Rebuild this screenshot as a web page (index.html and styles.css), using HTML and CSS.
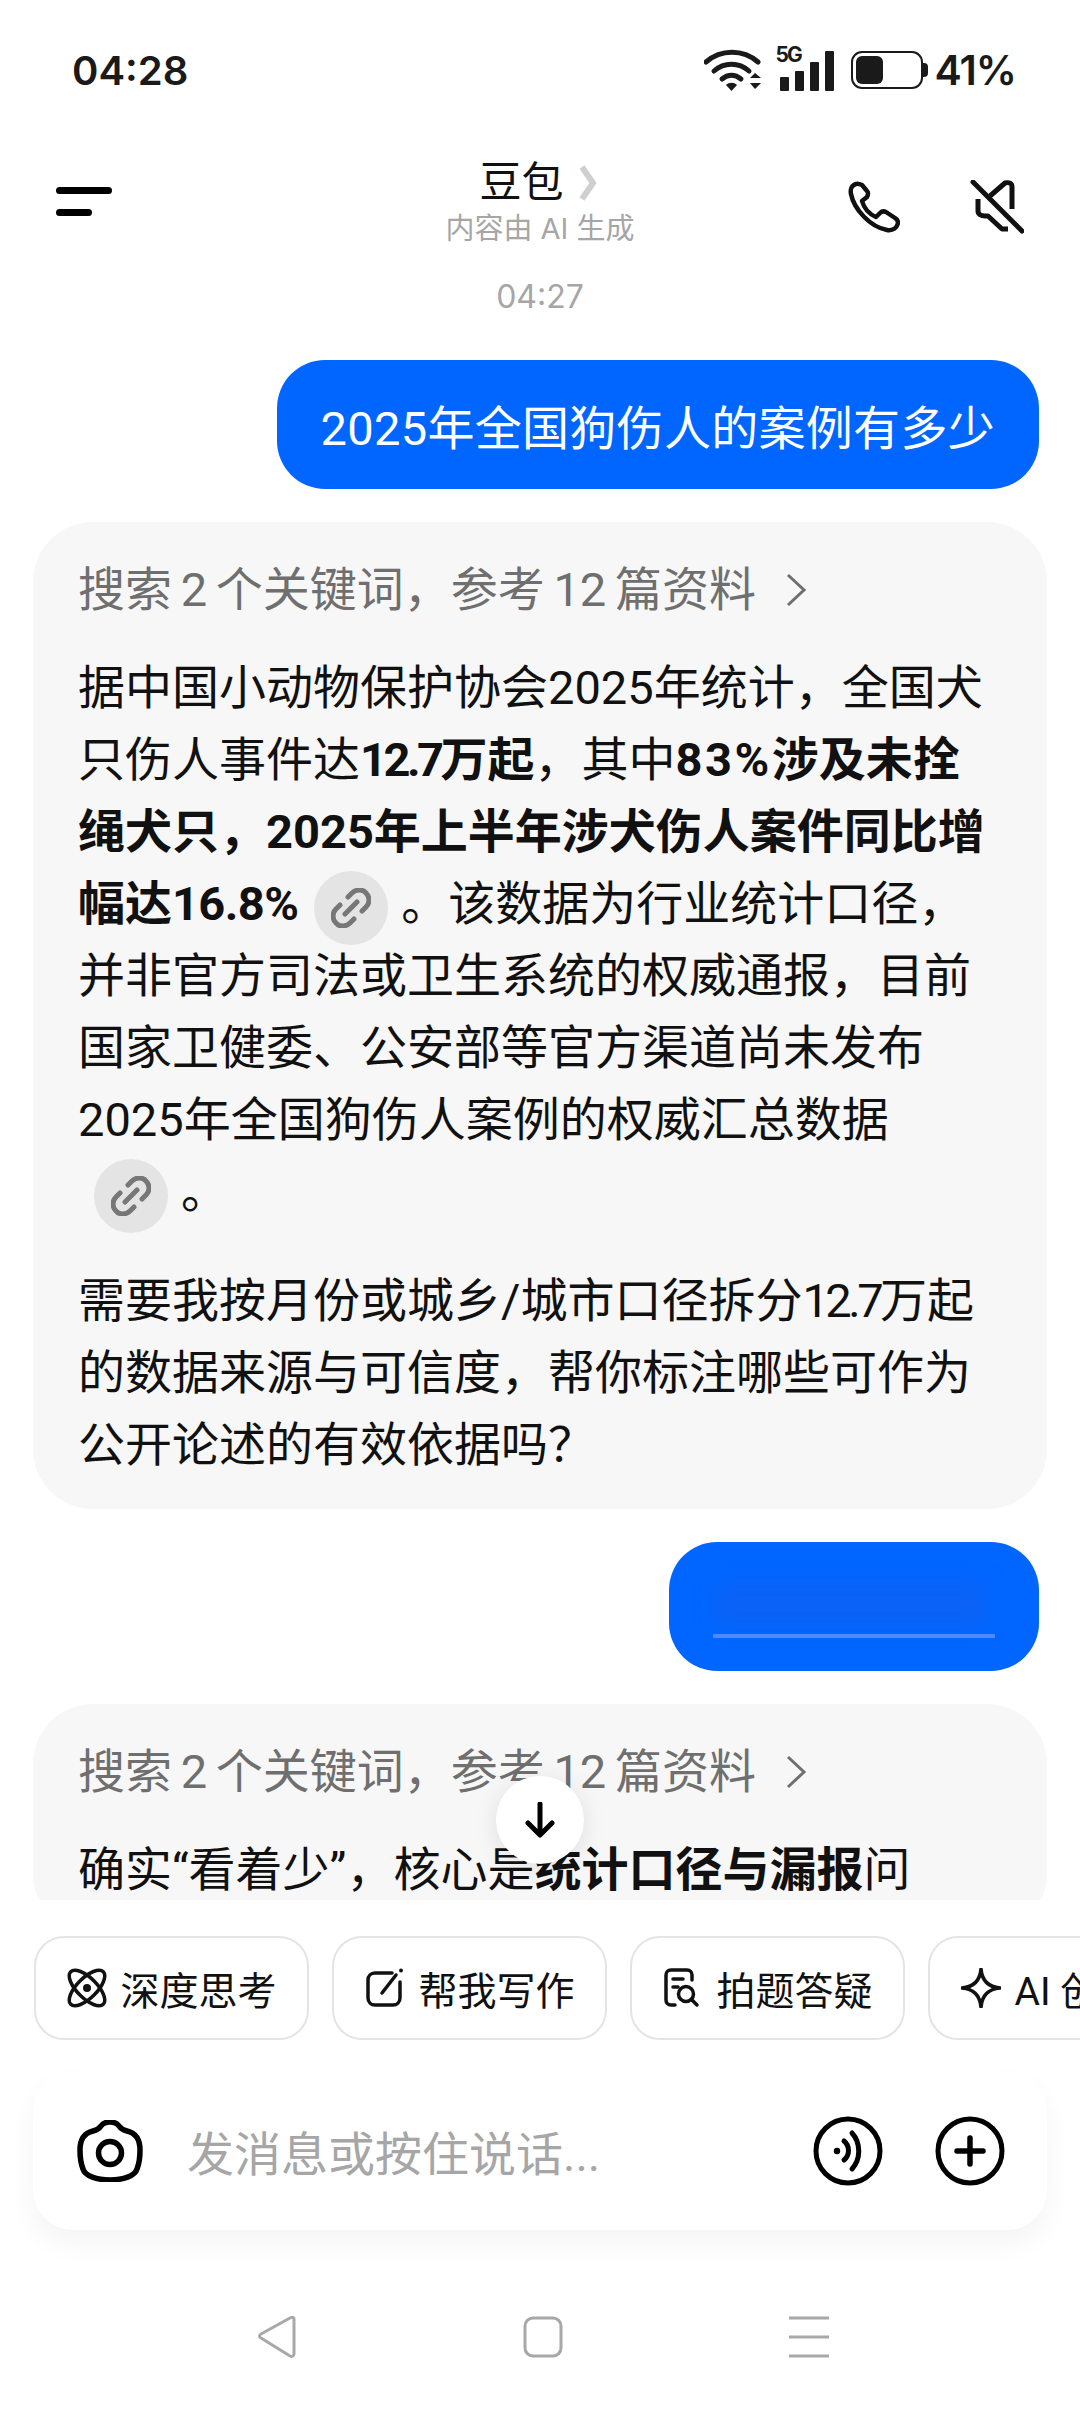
FILE: index.html
```html
<!DOCTYPE html>
<html lang="zh-CN">
<head>
    <meta charset="UTF-8">
    <meta name="viewport" content="width=device-width, initial-scale=1.0">
    <title>豆包</title>
    <link rel="stylesheet" href="styles.css">
</head>
<body>
    <div class="status-bar">
        <span class="status-time">04:28</span>
        <div class="status-icons">
            <svg class="wifi-icon" viewBox="0 0 58 42" width="58" height="42">
                <path d="M2 13C17 0 39 0 54 13" fill="none" stroke="#1a1a1a" stroke-width="5" stroke-linecap="round"/>
                <path d="M10 22C20 13 35 13 45 22" fill="none" stroke="#1a1a1a" stroke-width="5" stroke-linecap="round"/>
                <path d="M18 30C24 25 31 25 37 30" fill="none" stroke="#1a1a1a" stroke-width="5" stroke-linecap="round"/>
                <path d="M22 36C25 33 30 33 33 36L27.500 42Z" fill="#1a1a1a"/>
                <path d="M46 29L51 24L57 29ZM46 34H57L51 40Z" fill="#1a1a1a"/>
            </svg>
            <div class="signal">
                <span class="signal-label">5G</span>
                <span class="signal-bar bar-1"></span>
                <span class="signal-bar bar-2"></span>
                <span class="signal-bar bar-3"></span>
                <span class="signal-bar bar-4"></span>
            </div>
            <div class="battery"><span class="battery-level"></span></div>
            <span class="battery-nub"></span>
            <span class="status-percent">41%</span>
        </div>
    </div>

    <div class="top-bar">
        <div class="menu-btn"><span></span><span class="short"></span></div>
        <div class="title-block">
            <div class="title">豆包<svg class="title-arrow" viewBox="0 0 18 36" width="18" height="36"><path d="M3 2L14 18L3 34" fill="none" stroke="#cfcfcf" stroke-width="6"/></svg></div>
            <div class="subtitle">内容由 AI 生成</div>
        </div>
        <div class="top-actions">
            <svg viewBox="0 0 52 52" width="52" height="52">
                <path d="M8 3C4 4 2 8 3 13C6 28 22 46 39 49C45 50 49 47 50 42C50 40 49 38 47 37L38 31C36 30 34 30 32 32L28 36C21 33 16 27 14 20L19 16C20 14 21 12 19 10L14 4C12 3 10 2 8 3Z" fill="none" stroke="#111" stroke-width="4.500" stroke-linejoin="round"/>
            </svg>
            <svg viewBox="0 0 54 54" width="54" height="54">
                <path d="M3 2L52 51" fill="none" stroke="#111" stroke-width="5" stroke-linecap="round"/>
                <path d="M20 16L35 3C39 2 42 3 42 7V29" fill="none" stroke="#111" stroke-width="5" stroke-linejoin="round"/>
                <path d="M8 19V31C8 34 11 36 15 36H18L32 49H38" fill="none" stroke="#111" stroke-width="5" stroke-linejoin="round"/>
            </svg>
        </div>
    </div>

    <div class="chat">
        <div class="chat-time">04:27</div>

        <div class="user-row">
            <div class="user-bubble">2025年全国狗伤人的案例有多少</div>
        </div>

        <div class="ai-bubble">
            <div class="search-line">搜索 2 个关键词，参考 12 篇资料<svg viewBox="0 0 24 36" width="24" height="36"><path d="M4 3L20 18L4 33" fill="none" stroke="#6f6f6f" stroke-width="3"/></svg></div>
            <p class="answer">据中国小动物保护协会2025年统计，全国犬<br>只伤人事件达<b><span class="num-tight">12.7</span>万起</b>，其中<b><span class="num-wide">83%</span>涉及未拴</b><br><b>绳犬只，2025年上半年涉犬伤人案件同比增</b><br><b>幅达<span class="num-snug">16.8%</span></b><span class="link-chip"><svg viewBox="0 0 40 40" width="40" height="40"><path d="M17 9L21 5C25 1 32 1 35 5C39 9 39 15 35 19L31 23M23 31L19 35C15 39 8 39 5 35C1 31 1 25 5 21L9 17M14 26L26 14" fill="none" stroke="#777" stroke-width="5" stroke-linecap="round"/></svg></span>。该数据为行业统计口径，<br>并非官方司法或卫生系统的权威通报，目前<br>国家卫健委、公安部等官方渠道尚未发布<br>2025年全国狗伤人案例的权威汇总数据<br><span class="link-chip"><svg viewBox="0 0 40 40" width="40" height="40"><path d="M17 9L21 5C25 1 32 1 35 5C39 9 39 15 35 19L31 23M23 31L19 35C15 39 8 39 5 35C1 31 1 25 5 21L9 17M14 26L26 14" fill="none" stroke="#777" stroke-width="5" stroke-linecap="round"/></svg></span>。</p>
            <p class="answer">需要我按月份或城乡/城市口径拆分<span class="num-tight">12.7</span>万起<br>的数据来源与可信度，帮你标注哪些可作为<br>公开论述的有效依据吗？</p>
        </div>

        <div class="user-row">
            <div class="user-bubble blurred-bubble"><span class="blur-text"></span><span class="blur-line"></span></div>
        </div>

        <div class="ai-bubble">
            <div class="search-line">搜索 2 个关键词，参考 12 篇资料<svg viewBox="0 0 24 36" width="24" height="36"><path d="M4 3L20 18L4 33" fill="none" stroke="#6f6f6f" stroke-width="3"/></svg></div>
            <p class="answer">确实“看着少”，核心是<b>统计口径与漏报</b>问</p>
        </div>

        <div class="scroll-btn">
            <svg viewBox="0 0 32 36" width="32" height="36"><path d="M16 2V32M4 21L16 33L28 21" fill="none" stroke="#000" stroke-width="5" stroke-linecap="round" stroke-linejoin="round"/></svg>
        </div>
    </div>

    <div class="chips">
        <div class="chip">
            <svg viewBox="0 0 40 40" width="40" height="40"><g fill="none" stroke="#111" stroke-width="3.500"><ellipse cx="20" cy="20" rx="10" ry="23" transform="rotate(45 20 20)"/><ellipse cx="20" cy="20" rx="10" ry="23" transform="rotate(-45 20 20)"/></g><circle cx="20" cy="20" r="4" fill="#111"/></svg>
            深度思考
        </div>
        <div class="chip">
            <svg viewBox="0 0 40 40" width="40" height="40"><path d="M27 5H10C6 5 3 8 3 12V30C3 34 6 37 10 37H28C32 37 35 34 35 30V14" fill="none" stroke="#111" stroke-width="3.500" stroke-linecap="round"/><path d="M17 25L31 7" fill="none" stroke="#111" stroke-width="3.500" stroke-linecap="round"/><circle cx="36" cy="2.500" r="2" fill="#111"/></svg>
            帮我写作
        </div>
        <div class="chip">
            <svg viewBox="0 0 40 40" width="40" height="40"><path d="M12 37H8C5 37 3 35 3 32V7C3 4 5 2 8 2H24C27 2 29 4 29 7V12" fill="none" stroke="#111" stroke-width="3.500" stroke-linecap="round"/><path d="M10 11H20M10 19H15" fill="none" stroke="#111" stroke-width="3.500" stroke-linecap="round"/><circle cx="23" cy="26" r="7.500" fill="none" stroke="#111" stroke-width="3.500"/><path d="M29 32L34 37" fill="none" stroke="#111" stroke-width="3.500" stroke-linecap="round"/></svg>
            拍题答疑
        </div>
        <div class="chip">
            <svg viewBox="0 0 40 40" width="40" height="40"><path d="M20 1C21 12 27 19 39 20C27 21 21 28 20 39C19 28 13 21 1 20C13 19 19 12 20 1Z" fill="none" stroke="#111" stroke-width="3.500" stroke-linejoin="round"/></svg>
            AI 创作
        </div>
    </div>

    <div class="input-box">
        <svg class="camera-icon" viewBox="0 0 66 62" width="66" height="62">
            <path d="M3 30C3 18 8 13 16 11C20 10 22 9 24 6C26 3 28 2 33 2C38 2 40 3 42 6C44 9 46 10 50 11C58 13 63 18 63 30C63 38 62 44 60 49C58 56 46 60 33 60C20 60 8 56 6 49C4 44 3 38 3 30Z" fill="none" stroke="#000" stroke-width="5.500" stroke-linejoin="round"/>
            <circle cx="33" cy="33" r="11.500" fill="none" stroke="#000" stroke-width="5.500"/>
        </svg>
        <span class="placeholder">发消息或按住说话...</span>
        <div class="input-actions">
            <svg viewBox="0 0 70 70" width="70" height="70">
                <circle cx="35" cy="35" r="32" fill="none" stroke="#000" stroke-width="5"/>
                <circle cx="24" cy="35" r="3.200" fill="#000"/>
                <path d="M31 25C37 30 37 39 31 44" fill="none" stroke="#000" stroke-width="5" stroke-linecap="round"/>
                <path d="M39 17C48 27 48 43 39 53" fill="none" stroke="#000" stroke-width="5" stroke-linecap="round"/>
            </svg>
            <svg viewBox="0 0 70 70" width="70" height="70">
                <circle cx="35" cy="35" r="32" fill="none" stroke="#000" stroke-width="5"/>
                <path d="M35 22V48M22 35H48" fill="none" stroke="#000" stroke-width="5.500" stroke-linecap="round"/>
            </svg>
        </div>
    </div>

    <div class="nav-bar">
        <svg viewBox="0 0 40 42" width="40" height="42"><path d="M37 3V38C37 40 35 41 33 40L4 22C2 21 2 19 4 18L33 2C35 1 37 1 37 3Z" fill="none" stroke="#a8a8a8" stroke-width="3" stroke-linejoin="round"/></svg>
        <svg viewBox="0 0 40 42" width="40" height="42"><rect x="2" y="2" width="36" height="38" rx="8" fill="none" stroke="#a8a8a8" stroke-width="3"/></svg>
        <svg viewBox="0 0 40 42" width="40" height="42"><path d="M0 2H40M0 21H40M0 40H40" fill="none" stroke="#a8a8a8" stroke-width="3"/></svg>
    </div>
</body>
</html>
```

FILE: styles.css
```css
* {
    box-sizing: border-box;
}
html, body {
    margin: 0;
    padding: 0;
}
body {
    width: 1080px;
    height: 2412px;
    overflow: hidden;
    background-color: #ffffff;
    color: #111111;
    font-family: Roboto, "Noto Sans CJK SC", sans-serif;
    display: flex;
    flex-direction: column;
}
svg {
    display: block;
    flex-shrink: 0;
}

/* status bar */
.status-bar {
    height: 140px;
    padding: 0 64px 0 72px;
    display: flex;
    justify-content: space-between;
    align-items: center;
    font-family: Inter, sans-serif;
}
.status-time {
    font-size: 40px;
    font-weight: 600;
    color: #1a1a1a;
}
.status-icons {
    display: flex;
    align-items: center;
    color: #1a1a1a;
}
.wifi-icon {
    margin-right: 13px;
}
.signal {
    width: 60px;
    height: 42px;
    margin-right: 16px;
    display: flex;
    align-items: flex-end;
    gap: 6px;
    position: relative;
}
.signal-label {
    position: absolute;
    left: 0;
    top: -5px;
    font-size: 21px;
    line-height: 21px;
    font-weight: 700;
    letter-spacing: -2px;
}
.signal-bar {
    width: 9px;
    background-color: #1a1a1a;
    border-radius: 1px;
}
.bar-1 { height: 14px; margin-left: 5px; }
.bar-2 { height: 20px; }
.bar-3 { height: 29px; }
.bar-4 { height: 40px; }
.battery {
    width: 72px;
    height: 38px;
    padding: 3px;
    border: 2.500px solid #1a1a1a;
    border-radius: 11px;
}
.battery-level {
    display: block;
    width: 27px;
    height: 100%;
    background-color: #1a1a1a;
    border-radius: 6px;
}
.battery-nub {
    width: 5px;
    height: 14px;
    background-color: #1a1a1a;
    border-radius: 0 4px 4px 0;
    margin-right: 6px;
}
.status-percent {
    font-size: 41px;
    font-weight: 600;
    letter-spacing: -1px;
}

/* title row */
.top-bar {
    height: 122px;
    padding: 0 56px;
    display: flex;
    justify-content: space-between;
    align-items: center;
    position: relative;
}
.menu-btn {
    width: 56px;
    display: flex;
    flex-direction: column;
    gap: 15px;
}
.menu-btn span {
    display: block;
    height: 7px;
    background-color: #000000;
    border-radius: 4px;
}
.menu-btn .short {
    width: 36px;
}
.title-block {
    position: absolute;
    left: 0;
    right: 0;
    top: 16px;
    text-align: center;
}
.title {
    font-size: 42px;
    line-height: 54px;
    display: flex;
    justify-content: center;
    align-items: center;
    gap: 15px;
    padding-right: 4px;
}
.subtitle {
    font-family: Inter, "Noto Sans CJK SC", sans-serif;
    font-size: 29px;
    line-height: 38px;
    color: #a6a6a6;
}
.top-actions {
    display: flex;
    gap: 70px;
    align-items: center;
    padding-top: 12px;
}

/* chat */
.chat {
    flex: 1;
    min-height: 0;
    overflow: hidden;
    padding: 0 33px;
    position: relative;
    display: flex;
    flex-direction: column;
    gap: 33px;
}
.chat-time {
    font-family: Inter, sans-serif;
    text-align: center;
    font-size: 32px;
    line-height: 40px;
    margin-top: 15px;
    margin-bottom: 10px;
    color: #a6a6a6;
}
.user-row {
    display: flex;
    justify-content: flex-end;
    padding-right: 8px;
}
.user-bubble {
    height: 129px;
    padding: 0 44px;
    display: flex;
    align-items: center;
    background-color: #0066ff;
    color: #ffffff;
    font-size: 47px;
    letter-spacing: 0.300px;
    border-radius: 48px;
}
.blurred-bubble {
    width: 370px;
    position: relative;
}
.blur-text {
    position: absolute;
    left: 46px;
    top: 40px;
    width: 270px;
    height: 44px;
    background-color: #0a62f6;
    filter: blur(9px);
}
.blur-line {
    position: absolute;
    left: 44px;
    top: 92px;
    width: 282px;
    height: 4px;
    background-color: #4d8cf8;
}
.ai-bubble {
    flex-shrink: 0;
    background-color: #f7f7f7;
    border-radius: 60px;
    padding: 40px 45px 28px;
}
.search-line {
    display: flex;
    align-items: center;
    gap: 28px;
    font-size: 47px;
    line-height: 56px;
    word-spacing: -3px;
    color: #6f6f6f;
    margin-bottom: 34px;
}
.answer {
    margin: 0 0 37px;
    font-size: 47px;
    line-height: 72px;
    color: #111111;
}
.answer:last-child {
    margin-bottom: 0;
}
.answer b {
    font-weight: 700;
}
.num-tight {
    letter-spacing: -3.500px;
}
.num-snug {
    letter-spacing: -0.600px;
}
.num-wide {
    letter-spacing: 2.500px;
}
.link-chip {
    display: inline-flex;
    width: 74px;
    height: 74px;
    margin: -10px 13px -10px 16px;
    align-items: center;
    justify-content: center;
    vertical-align: middle;
    background-color: #e4e4e4;
    border-radius: 50%;
}
.scroll-btn {
    position: absolute;
    left: 496px;
    top: 1514px;
    width: 88px;
    height: 88px;
    display: flex;
    align-items: center;
    justify-content: center;
    background-color: #ffffff;
    border-radius: 50%;
    box-shadow: 0 4px 24px rgba(0, 0, 0, 0.1);
}

/* bottom part */
.chips {
    height: 171px;
    padding: 36px 0 0 34px;
    display: flex;
    gap: 23px;
    overflow: hidden;
}
.chip {
    flex-shrink: 0;
    height: 104px;
    padding: 0 30.500px;
    display: flex;
    align-items: center;
    gap: 14px;
    font-size: 39px;
    background-color: #ffffff;
    border: 2.500px solid #e4e4e4;
    border-radius: 30px;
}
.input-box {
    height: 159px;
    margin: 0 33px;
    padding: 0 42px 0 44px;
    display: flex;
    align-items: center;
    background-color: #ffffff;
    border-radius: 40px;
    box-shadow: 0 14px 26px rgba(0, 0, 0, 0.045);
}
.camera-icon {
    margin-right: 44px;
}
.placeholder {
    flex: 1;
    font-size: 47px;
    color: #a6a6a6;
}
.input-actions {
    display: flex;
    gap: 52px;
}
.nav-bar {
    height: 182px;
    padding: 32px 0 0 257px;
    display: flex;
    align-items: center;
    gap: 226px;
}
```
